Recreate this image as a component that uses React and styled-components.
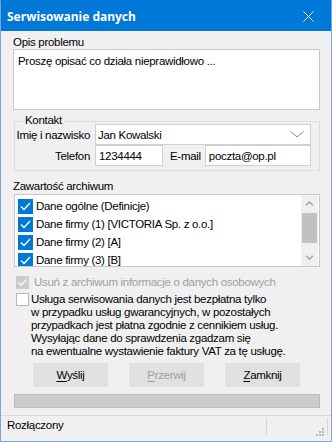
import React from 'react'
import styled, { createGlobalStyle } from 'styled-components'

const Global = createGlobalStyle`
  html, body { margin: 0; padding: 0; background: #ffffff; }
  body {
    font-family: "Liberation Sans", "Noto Sans", sans-serif;
    font-size: 11.5px;
    letter-spacing: -0.3px;
    color: #000;
  }
  * { box-sizing: border-box; }
`

const Window = styled.div`
  width: 332px;
  height: 442px;
  display: flex;
  flex-direction: column;
  background: #f0f0f0;
  border: 1px solid #7ca3dc;
  border-top-color: #0078d7;
`

const TitleBar = styled.div`
  flex: none;
  height: 30px;
  background: #0078d7;
  color: #fff;
  display: flex;
  align-items: center;
  justify-content: space-between;
  padding: 0 17px 0 6px;
  font-family: "Noto Sans", sans-serif;
  font-size: 12px;
  font-weight: bold;
  letter-spacing: 0;
`

const Body = styled.div`
  flex: 1;
  display: flex;
  flex-direction: column;
  padding: 4px 11px 0 12px;
`

const Label = styled.div`
  line-height: 14px;
  margin-top: ${p => p.$top || 0}px;
  margin-bottom: ${p => p.$bottom || 0}px;
  white-space: nowrap;
`

const TextArea = styled.div`
  height: 61px;
  background: #fff;
  border: 1px solid #c8c8c8;
  padding: 4px 4px;
  line-height: 14px;
`

const GroupBox = styled.div`
  position: relative;
  margin: 11px 0 0 1px;
  border: 1px solid #dcdcdc;
  padding: 2px 8px 4px 0;
  display: flex;
  flex-direction: column;
`

const GroupTitle = styled.span`
  position: absolute;
  top: -9px;
  left: 8px;
  padding: 0 2px;
  line-height: 14px;
  background: #f0f0f0;
`

const FieldRow = styled.div`
  display: flex;
  align-items: center;
  height: 21px;
`

const FieldLabel = styled.div`
  width: ${p => p.$w ? p.$w + 'px' : 'auto'};
  text-align: right;
  margin: ${p => p.$m || '0 5px 0 0'};
  white-space: nowrap;
`

const Input = styled.div`
  height: 21px;
  width: ${p => p.$w ? p.$w + 'px' : 'auto'};
  flex: ${p => p.$w ? 'none' : 1};
  background: #fff;
  border: 1px solid #d0d0d0;
  display: flex;
  align-items: center;
  justify-content: space-between;
  padding: 0 6px 0 ${p => p.$pl || 3}px;
  white-space: nowrap;
`

const ListBox = styled.div`
  height: 73px;
  margin-left: 1px;
  background: #fff;
  border: 1px solid #c8c8c8;
  display: flex;
  overflow: hidden;
`

const Items = styled.div`
  flex: 1;
  padding: 2px 0 0 3px;
  overflow: hidden;
`

const Item = styled.div`
  height: 18px;
  display: flex;
  align-items: center;
`

const ItemText = styled.span`
  flex: 1;
  margin-left: 3px;
  line-height: 15px;
  white-space: nowrap;
  box-shadow: ${p => p.$current ? 'inset 0 -2px 0 #9ccbf0' : 'none'};
`

const ScrollBar = styled.div`
  flex: none;
  width: 17px;
  margin-right: 1px;
  background: #f0f0f0;
  display: flex;
  flex-direction: column;
`

const ScrollArrow = styled.div`
  flex: none;
  height: 17px;
  display: flex;
  align-items: center;
  justify-content: center;
`

const Thumb = styled.div`
  flex: none;
  height: 30px;
  margin: 1px 1px 0;
  background: #c1c1c1;
`

const Spacer = styled.div`
  flex: 1;
`

const CheckRow = styled.div`
  display: flex;
  align-items: ${p => p.$top ? 'flex-start' : 'center'};
  margin-top: ${p => p.$mt}px;
  padding-left: 3px;
  min-height: 16px;
  color: ${p => p.$disabled ? '#a0a0a0' : '#000'};
`

const Box = styled.span`
  flex: none;
  width: ${p => p.$size}px;
  height: ${p => p.$size}px;
  display: inline-flex;
  align-items: center;
  justify-content: center;
  background: ${p => p.$checked ? (p.$disabled ? '#cccccc' : '#0078d7') : '#fff'};
  border: 1px solid ${p => p.$checked ? (p.$disabled ? '#cccccc' : '#0078d7') : '#b8b8b8'};
`

const CheckText = styled.div`
  margin-left: ${p => p.$gap}px;
  line-height: ${p => p.$lh || 16}px;
  white-space: nowrap;
`

const Buttons = styled.div`
  display: flex;
  justify-content: center;
  gap: 21px;
  margin-top: 5px;
`

const Button = styled.div`
  width: 75px;
  height: 24px;
  background: #e1e1e1;
  border: 1px solid #e1e1e1;
  display: flex;
  align-items: center;
  justify-content: center;
  color: ${p => p.$disabled ? '#a0a0a0' : '#000'};
`

const Mnemonic = styled.span`
  text-decoration: underline;
  text-underline-offset: 2px;
`

const Progress = styled.div`
  height: 14px;
  margin: 7px 0 0 1px;
  background: #cccccc;
  border: 1px solid #bcbcbc;
`

const StatusBar = styled.div`
  flex: none;
  height: 26px;
  border-top: 1px solid #dadada;
  display: flex;
  padding: 2px 0 6px;
`

const StatusText = styled.div`
  flex: 1;
  padding-left: 6px;
  line-height: 14px;
`

const Pane = styled.div`
  flex: none;
  width: ${p => p.$w}px;
  border-left: 1px solid #d5d5d5;
  display: flex;
  justify-content: flex-end;
  align-items: flex-end;
`

const Check = ({ size }) => (
  <svg width={size - 2} height={size - 2} viewBox="0 0 13 13">
    <polyline points="2,6.5 5,9.5 11,3" fill="none" stroke="#fff" strokeWidth="1.4" />
  </svg>
)

const CheckBox = ({ size, checked, disabled }) => (
  <Box $size={size} $checked={checked} $disabled={disabled}>
    {checked && <Check size={size} />}
  </Box>
)

const items = [
  'Dane ogólne (Definicje)',
  'Dane firmy (1) [VICTORIA Sp. z o.o.]',
  'Dane firmy (2) [A]',
  'Dane firmy (3) [B]',
]

const notice = [
  'Usługa serwisowania danych jest bezpłatna tylko',
  'w przypadku usług gwarancyjnych, w pozostałych',
  'przypadkach jest płatna zgodnie z cennikiem usług.',
  'Wysyłając dane do sprawdzenia zgadzam się',
  'na ewentualne wystawienie faktury VAT za tę usługę.',
]

export default function App() {
  return (
    <>
      <Global />
      <Window>
        <TitleBar>
          <span>Serwisowanie danych</span>
          <svg width="11" height="11" viewBox="0 0 11 11">
            <path d="M0.5 0.5 L10.5 10.5 M10.5 0.5 L0.5 10.5" stroke="#fff" strokeWidth="1" />
          </svg>
        </TitleBar>
        <Body>
          <Label>Opis problemu</Label>
          <TextArea>Proszę opisać co działa nieprawidłowo ...</TextArea>

          <GroupBox>
            <GroupTitle>Kontakt</GroupTitle>
            <FieldRow>
              <FieldLabel $w={75}>Imię i nazwisko</FieldLabel>
              <Input $pl={2}>
                <span>Jan Kowalski</span>
                <svg width="14" height="7" viewBox="0 0 14 7">
                  <polyline points="0.5,0.5 7,6 13.5,0.5" fill="none" stroke="#8a8a8a" strokeWidth="1" />
                </svg>
              </Input>
            </FieldRow>
            <FieldRow>
              <FieldLabel $w={75}>Telefon</FieldLabel>
              <Input $w={68}>1234444</Input>
              <FieldLabel $m="0 4px 0 7px">E-mail</FieldLabel>
              <Input>poczta@op.pl</Input>
            </FieldRow>
          </GroupBox>

          <Label $top={8} $bottom={1}>Zawartość archiwum</Label>
          <ListBox>
            <Items>
              {items.map((t, i) => (
                <Item key={i}>
                  <CheckBox size={15} checked />
                  <ItemText $current={i === 3}>{t}</ItemText>
                </Item>
              ))}
            </Items>
            <ScrollBar>
              <ScrollArrow>
                <svg width="9" height="5" viewBox="0 0 9 5">
                  <polyline points="1,4.2 4.5,1 8,4.2" fill="none" stroke="#a3a3a3" strokeWidth="1.5" />
                </svg>
              </ScrollArrow>
              <Thumb />
              <Spacer />
              <ScrollArrow>
                <svg width="9" height="5" viewBox="0 0 9 5">
                  <polyline points="1,0.8 4.5,4 8,0.8" fill="none" stroke="#a3a3a3" strokeWidth="1.5" />
                </svg>
              </ScrollArrow>
            </ScrollBar>
          </ListBox>

          <CheckRow $mt={7} $disabled>
            <CheckBox size={13} checked disabled />
            <CheckText $gap={5}>Usuń z archiwum informacje o danych osobowych</CheckText>
          </CheckRow>
          <CheckRow $mt={3} $top>
            <CheckBox size={13} />
            <CheckText $gap={2} $lh={13}>
              {notice.map((l, i) => <div key={i}>{l}</div>)}
            </CheckText>
          </CheckRow>

          <Buttons>
            <Button><span><Mnemonic>W</Mnemonic>yślij</span></Button>
            <Button $disabled><span><Mnemonic>P</Mnemonic>rzerwij</span></Button>
            <Button><span><Mnemonic>Z</Mnemonic>amknij</span></Button>
          </Buttons>

          <Progress />
        </Body>
        <StatusBar>
          <StatusText>Rozłączony</StatusText>
          <Pane $w={61}>
            <svg width="10" height="10" viewBox="0 0 10 10" style={{ marginRight: 3, marginBottom: -1 }}>
              <rect x="8" y="2" width="2" height="2" fill="#b8b8b8" />
              <rect x="5" y="5" width="2" height="2" fill="#b8b8b8" />
              <rect x="8" y="5" width="2" height="2" fill="#b8b8b8" />
              <rect x="2" y="8" width="2" height="2" fill="#b8b8b8" />
              <rect x="5" y="8" width="2" height="2" fill="#b8b8b8" />
              <rect x="8" y="8" width="2" height="2" fill="#b8b8b8" />
            </svg>
          </Pane>
          <Pane $w={4} />
        </StatusBar>
      </Window>
    </>
  )
}
